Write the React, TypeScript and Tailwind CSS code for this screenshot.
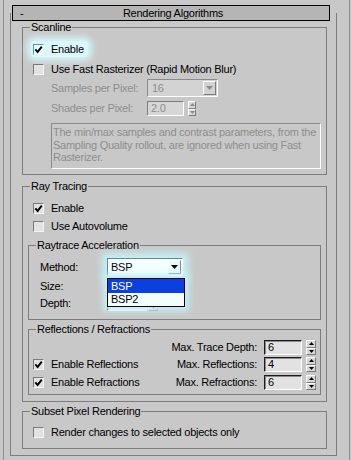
import React from "react";

function Check({ checked = false, glow = false }: { checked?: boolean; glow?: boolean }) {
  return (
    <span
      className={`flex h-[11px] w-[11px] shrink-0 items-center justify-center border ${
        glow
          ? "border-t-[#3f9fd4] border-l-[#3f9fd4] border-b-[#eafcff] border-r-[#eafcff] bg-[#f4fdff]"
          : "border-t-[#7b7b7b] border-l-[#7b7b7b] border-b-[#f4f4f4] border-r-[#f4f4f4] bg-[#e2e2e2]"
      }`}
    >
      {checked && (
        <svg width="9" height="9" viewBox="0 0 9 9">
          <path d="M1.3 4.3 L3.6 6.9 L7.8 1.6" fill="none" stroke="#000" strokeWidth="1.9" />
        </svg>
      )}
    </span>
  );
}

function Down({ color }: { color: string }) {
  return (
    <svg width="7" height="4" viewBox="0 0 7 4">
      <path d="M0 0 L7 0 L3.5 4 Z" fill={color} />
    </svg>
  );
}

function Spinner({ className = "", dim = false }: { className?: string; dim?: boolean }) {
  const c = dim ? "#8c8c8c" : "#000";
  return (
    <span className={`flex h-[15px] shrink-0 flex-col ${className}`}>
      <span className="flex flex-1 items-center justify-center border border-t-white border-l-white border-b-[#7b7b7b] border-r-[#7b7b7b] bg-[#d8d8d8]">
        <svg width="5" height="3" viewBox="0 0 5 3">
          <path d="M2.5 0 L5 3 L0 3 Z" fill={c} />
        </svg>
      </span>
      <span className="flex flex-1 items-center justify-center border border-t-white border-l-white border-b-[#7b7b7b] border-r-[#7b7b7b] bg-[#d8d8d8]">
        <svg width="5" height="3" viewBox="0 0 5 3">
          <path d="M0 0 L5 0 L2.5 3 Z" fill={c} />
        </svg>
      </span>
    </span>
  );
}

function NumBox({ value, className = "", dim = false }: { value: string; className?: string; dim?: boolean }) {
  return (
    <span
      className={`flex h-[15px] shrink-0 items-center border pl-[3px] ${
        dim
          ? "border-t-[#7e7e7e] border-l-[#7e7e7e] border-b-white border-r-white bg-[#d6d6d6] text-[#8e8e8e]"
          : "border-t-[#1c1c1c] border-l-[#1c1c1c] border-b-white border-r-white bg-[#e2e2e2] shadow-[inset_1px_1px_0_#8a8a8a]"
      } ${className}`}
    >
      {value}
    </span>
  );
}

function Group({ title, className = "", children }: { title: string; className?: string; children?: React.ReactNode }) {
  return (
    <div className={`border border-[#7d7d7d] ${className}`}>
      <div className="-mt-[7px] ml-[7px] w-fit bg-[#c8c8c8] px-[1px] leading-[13px]">{title}</div>
      {children}
    </div>
  );
}

function CheckRow({ label, checked = false, className = "" }: { label: string; checked?: boolean; className?: string }) {
  return (
    <div className={`flex h-[16px] items-center gap-[7px] ${className}`}>
      <Check checked={checked} />
      <span>{label}</span>
    </div>
  );
}

export default function App() {
  return (
    <div className="h-[460px] w-[351px] overflow-hidden bg-[#c8c8c8] pl-[3px] pr-[1px] font-['Liberation_Sans',Arial,sans-serif] text-[11px] leading-[13px] tracking-[-0.25px] text-black">
      <div className="h-full border-x border-[#8e8e8e] pl-[6px] pt-[5px]">
        {/* rollout title bar */}
        <div className="relative z-10 ml-[2px] flex h-[16px] w-[318px] items-center border border-black bg-[#b5b5b5]">
          <span className="w-[20px] pl-[7px]">-</span>
          <span className="flex-1 pr-[16px] text-center">Rendering Algorithms</span>
        </div>

        {/* rollout body */}
        <div className="-mt-[8px] h-[443px] w-[327px] border-x border-b border-[#7d7d7d] pl-[11px] pt-[14px]">
          {/* Scanline */}
          <Group title="Scanline" className="h-[148px] w-[305px]">
            <div className="ml-[8px] mt-[7px] flex h-[16px] w-fit items-center gap-[7px] rounded-[4px] bg-[#dcf7fb] pl-[2px] pr-[4px] shadow-[0_0_6px_4px_#d3f5f9]">
              <Check checked glow />
              <span>Enable</span>
            </div>
            <CheckRow label="Use Fast Rasterizer (Rapid Motion Blur)" className="ml-[10px] mt-[4px]" />

            <div className="ml-[28px] mt-[2px] flex h-[18px] items-center text-[#8e8e8e]">
              <span className="w-[96px]">Samples per Pixel:</span>
              <span className="flex h-[18px] w-[71px] items-center justify-between border border-t-[#8a8a8a] border-l-[#8a8a8a] border-b-white border-r-white bg-[#d3d3d3] pl-[4px] pr-[1px]">
                16
                <span className="flex h-[14px] w-[13px] items-center justify-center border border-t-white border-l-white border-b-[#7b7b7b] border-r-[#7b7b7b] bg-[#d2d2d2]">
                  <Down color="#8c8c8c" />
                </span>
              </span>
            </div>

            <div className="ml-[28px] mt-[4px] flex h-[15px] items-center text-[#8e8e8e]">
              <span className="w-[96px]">Shades per Pixel:</span>
              <NumBox value="2.0" dim className="w-[37px]" />
              <Spinner dim className="ml-[4px] w-[8px]" />
            </div>

            <div className="ml-[28px] mt-[7px] h-[46px] w-[270px] whitespace-nowrap border border-t-[#8a8a8a] border-l-[#8a8a8a] border-b-white border-r-white pl-[1px] pt-[2px] leading-[12.5px] text-[#8e8e8e]">
              The min/max samples and contrast parameters, from the
              <br />
              Sampling Quality rollout, are ignored when using Fast
              <br />
              Rasterizer.
            </div>
          </Group>

          {/* Ray Tracing */}
          <Group title="Ray Tracing" className="mt-[11px] h-[216px] w-[305px]">
            <CheckRow label="Enable" checked className="ml-[10px] mt-[7px]" />
            <CheckRow label="Use Autovolume" className="ml-[10px] mt-[2px]" />

            <Group title="Raytrace Acceleration" className="ml-[5px] mt-[11px] h-[75px] w-[293px]">
              <div className="ml-[11px] mt-[6px] flex h-[18px] items-center">
                <span className="w-[67px]">Method:</span>
                <span className="relative z-10">
                  <span className="flex h-[18px] w-[76px] items-center justify-between border border-t-[#5f8b93] border-l-[#5f8b93] border-b-white border-r-white bg-[#f3feff] pl-[3px] pr-[1px] shadow-[0_0_7px_5px_#c4f1f6]">
                    BSP
                    <span className="flex h-[14px] w-[13px] items-center justify-center border border-t-white border-l-white border-b-[#6f8f94] border-r-[#6f8f94] bg-[#e6fafc]">
                      <Down color="#000" />
                    </span>
                  </span>
                  {/* open dropdown list */}
                  <span className="absolute left-0 top-[20px] block w-[78px] border border-black bg-[#f2fdfe] shadow-[0_0_6px_4px_#c4f1f6]">
                    <span className="block h-[14px] bg-[#0b3fe0] pl-[3px] leading-[14px] text-white">BSP</span>
                    <span className="block h-[13px] pl-[3px] leading-[13px]">BSP2</span>
                  </span>
                </span>
              </div>
              <div className="ml-[11px] mt-[2px] flex h-[16px] items-center">
                <span className="w-[67px]">Size:</span>
                <NumBox value="" className="w-[40px]" />
                <Spinner className="ml-[1px] w-[10px]" />
              </div>
              <div className="ml-[11px] mt-[2px] flex h-[15px] items-center">
                <span className="w-[67px]">Depth:</span>
                <NumBox value="" className="w-[40px] bg-[#eafcfd]" />
                <Spinner className="ml-[1px] w-[10px]" />
              </div>
            </Group>

            <Group title="Reflections / Refractions" className="ml-[5px] mt-[9px] h-[66px] w-[293px]">
              <div className="mt-[4px] flex h-[15px] items-center pl-[4px] pr-[4px]">
                <span className="flex-1" />
                <span className="mr-[7px]">Max. Trace Depth:</span>
                <NumBox value="6" className="w-[38px]" />
                <Spinner className="ml-[4px] w-[10px]" />
              </div>
              <div className="mt-[2px] flex h-[15px] items-center pl-[4px] pr-[4px]">
                <span className="flex flex-1 items-center gap-[7px]">
                  <Check checked />
                  Enable Reflections
                </span>
                <span className="mr-[7px]">Max. Reflections:</span>
                <NumBox value="4" className="w-[38px]" />
                <Spinner className="ml-[4px] w-[10px]" />
              </div>
              <div className="mt-[3px] flex h-[15px] items-center pl-[4px] pr-[4px]">
                <span className="flex flex-1 items-center gap-[7px]">
                  <Check checked />
                  Enable Refractions
                </span>
                <span className="mr-[7px]">Max. Refractions:</span>
                <NumBox value="6" className="w-[38px]" />
                <Spinner className="ml-[4px] w-[10px]" />
              </div>
            </Group>
          </Group>

          {/* Subset Pixel Rendering */}
          <Group title="Subset Pixel Rendering" className="mt-[9px] h-[38px] w-[305px]">
            <CheckRow label="Render changes to selected objects only" className="ml-[10px] mt-[6px]" />
          </Group>
        </div>
      </div>
    </div>
  );
}
